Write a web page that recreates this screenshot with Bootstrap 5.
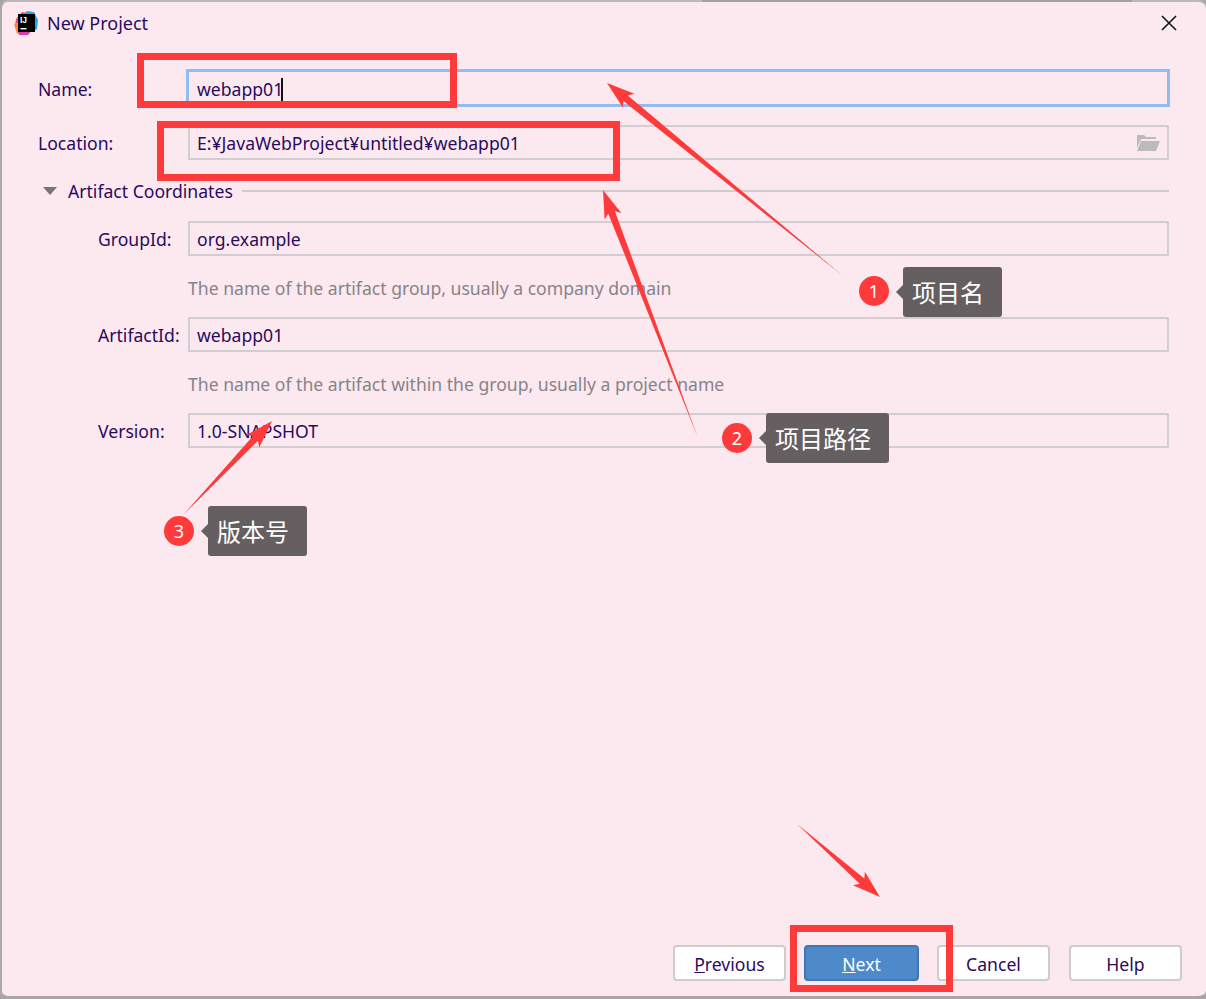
<!DOCTYPE html>
<html lang="en">
  <head>
    <meta charset="UTF-8" />
    <title>New Project</title>
    <link rel="stylesheet" href="https://cdn.jsdelivr.net/npm/bootstrap@5.3.0/dist/css/bootstrap.min.css" />
    <style>
      html, body { height: 100%; margin: 0; background: #a9a5a7; overflow: hidden; }
      .dlg {
        width: 1206px; height: 999px; background: #fbe9ef; color: #2b0a5e;
        font-family: "Noto Sans", sans-serif; font-size: 17.6px; line-height: 24px;
        border-left: 2px solid #aca8aa; border-top: 2px solid #bdb9bb; border-bottom: 3px solid #a9a5a7;
        border-radius: 8px;
      }
      .top-shade { position: absolute; left: 700px; top: -2px; width: 430px; height: 2px; background: #a5a1a3; }
      .dlg-title { height: 42px; padding: 0 29px 0 12px; font-size: 18px; }
      .logo-mark { margin-right: 9px; }
      .dlg-form { padding: 25px 37px 0 36px; }
      .field { height: 35px; border: 2px solid #d2cdd0; padding: 0 7px; line-height: 32px; }
      .field-focus { height: 38px; margin-left: -2px; margin-right: -1px; padding-left: 8px; border: 3px solid #91bdec; line-height: 34px; }
      .caret-bar { display: inline-block; width: 2px; height: 24px; background: #111; vertical-align: -6px; margin-left: -2px; }
      .lbl-top { width: 150px; flex: none; padding-top: 1px; }
      .lbl-sub { width: 90px; flex: none; padding-top: 1px; }
      .row-loc { margin-top: 18px; }
      .artifact-head { margin: 19px 0 18px; }
      .sub-rows { padding-left: 60px; }
      .hint { color: #87838a; margin: 20px 0 17px 90px; }
      .sep { flex: 1; height: 2px; margin-left: 9px; background: #cfcbce; }
      .tri { width: 0; height: 0; margin: 0 11px 0 5px; border: 7px solid transparent; border-top: 8px solid #76757a; border-bottom: 0; }
      .foot { position: absolute; left: 671px; top: 943px; }
      .ide-btn {
        width: 113px; height: 36px; padding: 0; background: #fff; border: 2px solid #cdcdcd; border-radius: 4px;
        color: #2b0a5e; font-size: 17.6px; line-height: 34px; --bs-btn-hover-bg: #fff;
      }
      .btn-next { width: 115px; margin: 0 18px; background: #4e89c9; border-color: #3f76b3; color: #fff; }
      .btn-help { margin-left: 19px; }
      .overlay { position: absolute; left: 0; top: 0; width: 1206px; height: 999px; pointer-events: none; }
      .num {
        position: absolute; width: 30px; height: 30px; border-radius: 50%; background: #fe3a3a; color: #fff;
        font-size: 18px; line-height: 30px; text-align: center;
      }
      .tip {
        position: absolute; height: 50px; padding: 0 18px 0 9px; background: #655f61; color: #fff; border-radius: 3px;
        font-family: "Noto Sans CJK SC", sans-serif; font-size: 24px; line-height: 50px; white-space: nowrap;
      }
      .tip::before {
        content: ""; position: absolute; left: -7px; top: 18px;
        border: 7px solid transparent; border-left: 0; border-right-color: #655f61;
      }
    </style>
  </head>
  <body class="position-relative">
    <div class="dlg position-relative">
      <div class="top-shade"></div>
      <div class="dlg-title d-flex align-items-center">
        <svg width="24" height="24" viewBox="0 0 24 24" class="logo-mark flex-shrink-0">
          <path d="M2 8 8 1 14 2 8 14 1 15Z" fill="#f9457e" />
          <path d="M0 13 5 11 6 21 3 23Z" fill="#ff8a2b" />
          <path d="M12 0 20 1 24 9 23 18 18 21 14 10Z" fill="#19a9e8" />
          <path d="M4 20 18 19 14 24 5 24Z" fill="#d83fa8" />
          <rect x="4" y="3" width="17" height="18" fill="#000" />
          <text x="6" y="12" fill="#fff" font-family="Liberation Sans, sans-serif" font-size="8.5" font-weight="700">IJ</text>
          <rect x="6.5" y="17" width="6" height="1.4" fill="#fff" />
        </svg>
        <span>New Project</span>
        <svg width="16" height="16" viewBox="0 0 16 16" class="ms-auto flex-shrink-0">
          <path d="M1 1 15 15M15 1 1 15" stroke="#151515" stroke-width="1.6" fill="none" />
        </svg>
      </div>

      <div class="dlg-form">
        <div class="d-flex align-items-center">
          <div class="lbl-top">Name:</div>
          <div class="field field-focus flex-grow-1">webapp01<span class="caret-bar"></span></div>
        </div>
        <div class="d-flex align-items-center row-loc">
          <div class="lbl-top">Location:</div>
          <div class="field flex-grow-1 d-flex align-items-center justify-content-between">
            <span>E:¥JavaWebProject¥untitled¥webapp01</span>
            <svg width="24" height="18" viewBox="0 0 24 18" class="me-n1">
              <path d="M1 1H8L10 3H20V5H5L1 14Z" fill="#bdbabd" />
              <path d="M5 7H24L20 17H1Z" fill="#bdbabd" />
            </svg>
          </div>
        </div>

        <div class="d-flex align-items-center artifact-head">
          <div class="tri"></div>
          <span>Artifact Coordinates</span>
          <div class="sep"></div>
        </div>

        <div class="sub-rows">
          <div class="d-flex align-items-center">
            <div class="lbl-sub">GroupId:</div>
            <div class="field flex-grow-1">org.example</div>
          </div>
          <div class="hint">The name of the artifact group, usually a company domain</div>
          <div class="d-flex align-items-center">
            <div class="lbl-sub">ArtifactId:</div>
            <div class="field flex-grow-1">webapp01</div>
          </div>
          <div class="hint">The name of the artifact within the group, usually a project name</div>
          <div class="d-flex align-items-center">
            <div class="lbl-sub">Version:</div>
            <div class="field flex-grow-1">1.0-SNAPSHOT</div>
          </div>
        </div>
      </div>

      <div class="foot d-flex">
        <button type="button" class="btn ide-btn"><u>P</u>revious</button>
        <button type="button" class="btn ide-btn btn-next"><u>N</u>ext</button>
        <button type="button" class="btn ide-btn">Cancel</button>
        <button type="button" class="btn ide-btn btn-help">Help</button>
      </div>
    </div>

    <!-- annotations drawn on top of the dialog -->
    <svg class="overlay" viewBox="0 0 1206 999">
      <g fill="none" stroke="#fe3a3a" stroke-width="7">
        <rect x="140.5" y="56.5" width="313" height="48" />
        <rect x="160.5" y="124.5" width="456" height="53" />
        <rect x="793.5" y="928.5" width="156" height="60" />
      </g>
      <g id="arrows" fill="#fe3a3a"></g>
    </svg>
    <div class="num" style="left: 859px; top: 276px">1</div>
    <div class="tip" style="left: 903px; top: 267px">项目名</div>
    <div class="num" style="left: 722px; top: 423px">2</div>
    <div class="tip" style="left: 766px; top: 413px">项目路径</div>
    <div class="num" style="left: 164px; top: 516px">3</div>
    <div class="tip" style="left: 208px; top: 506px">版本号</div>

    <script src="https://cdn.jsdelivr.net/npm/bootstrap@5.3.0/dist/js/bootstrap.bundle.min.js"></script>
    <script>
      // tapered arrow: thin tail, head with small barbs
      function arrow(x1, y1, x2, y2) {
        var dx = x2 - x1, dy = y2 - y1, len = Math.hypot(dx, dy);
        var ux = dx / len, uy = dy / len, nx = -uy, ny = ux;
        var at = function (back, side) {
          return (x2 - ux * back + nx * side).toFixed(1) + ',' + (y2 - uy * back + ny * side).toFixed(1);
        };
        var pts = [x1 + ',' + y1, at(24, 3.5), at(28, 9), at(0, 0), at(28, -9), at(24, -3.5)];
        var p = document.createElementNS('http://www.w3.org/2000/svg', 'polygon');
        p.setAttribute('points', pts.join(' '));
        document.querySelector('#arrows').appendChild(p);
      }
      arrow(843, 276, 607, 83);
      arrow(698, 438, 603, 190);
      arrow(184, 514, 272, 421);
      arrow(797, 824, 880, 897);
    </script>
  </body>
</html>
